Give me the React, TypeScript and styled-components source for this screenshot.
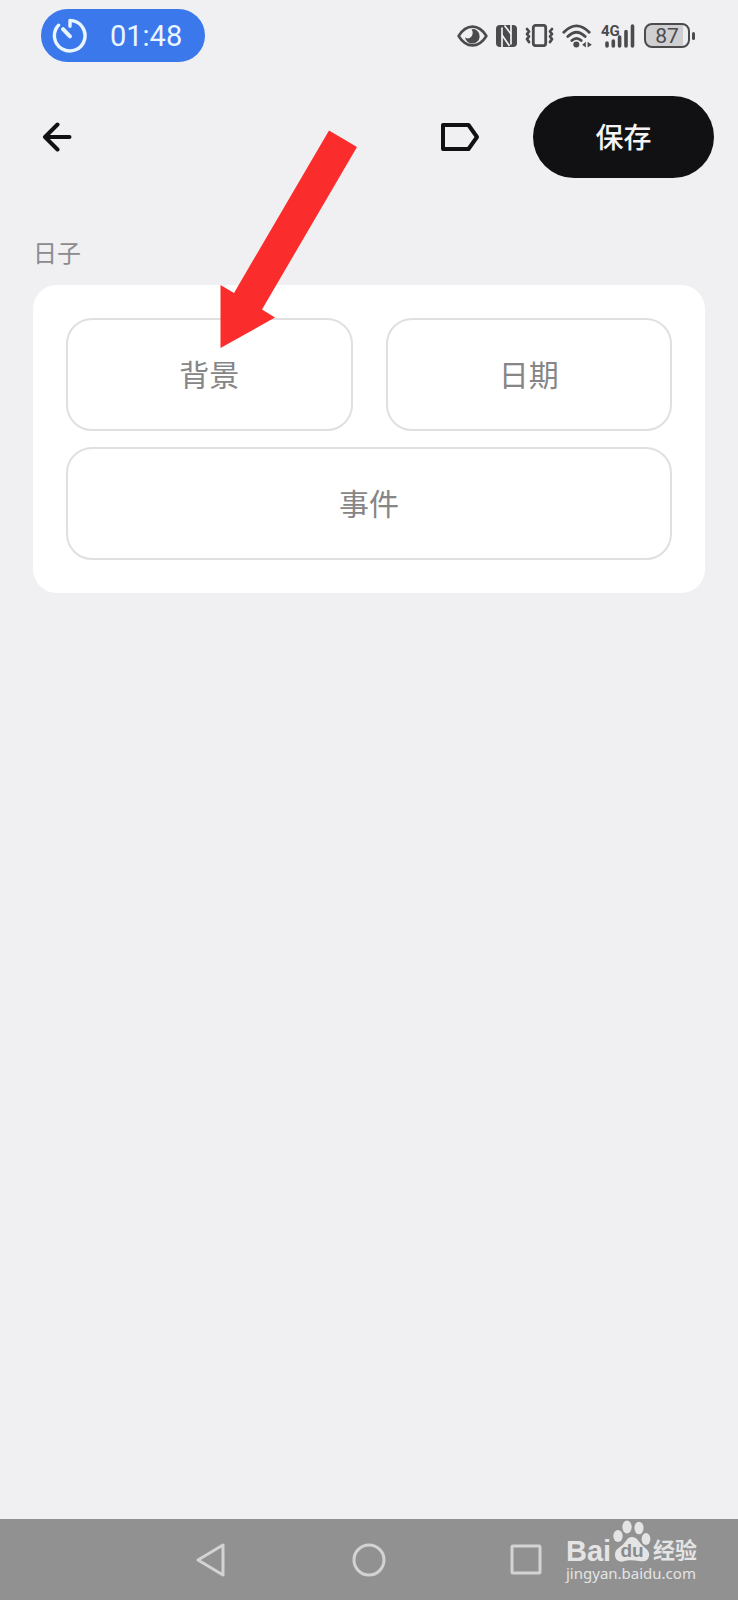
import React from "react";
import styled, { createGlobalStyle } from "styled-components";

const INK = "#111114";
const STATUS = "#4b4b4d";
const PAGE = "#f0f0f3";

const GlobalStyle = createGlobalStyle`
  *, *::before, *::after { box-sizing: border-box; }
  body {
    margin: 0;
    background: ${PAGE};
    font-family: Roboto, "Noto Sans CJK SC", sans-serif;
  }
  button { font-family: inherit; cursor: pointer; }
  svg { display: block; }
`;

const Screen = styled.div`
  position: relative;
  display: flex;
  flex-direction: column;
  min-height: 100vh;
  background: ${PAGE};
  overflow: hidden;
`;

const StatusBar = styled.header`
  display: flex;
  align-items: center;
  justify-content: space-between;
  height: 71px;
  padding: 0 43px 0 41px;
`;

const TimerPill = styled.div`
  display: flex;
  align-items: center;
  gap: 23px;
  height: 53px;
  padding: 0 23px 0 11px;
  border-radius: 27px;
  background: #3b78ec;
  color: #eaf6ff;
  font-size: 29px;
  font-weight: 400;
  line-height: 32px;
`;

const StatusIcons = styled.div`
  display: flex;
  align-items: center;
  gap: 8px;
  color: ${STATUS};
`;

const Battery = styled.div`
  display: flex;
  align-items: center;
  gap: 2px;
`;

const BatteryBody = styled.span`
  width: 46px;
  height: 25px;
  border: 2px solid ${STATUS};
  border-radius: 8px;
  background: linear-gradient(to right, #cfcfd1 87%, #ededf0 87%);
  font-size: 21px;
  font-weight: 400;
  line-height: 22px;
  text-align: center;
`;

const BatteryTip = styled.span`
  width: 3px;
  height: 8px;
  border-radius: 2px;
  background: ${STATUS};
`;

const Toolbar = styled.div`
  display: flex;
  align-items: center;
  height: 132px;
  padding: 0 24px 0 33px;
`;

const IconButton = styled.button`
  display: flex;
  align-items: center;
  justify-content: center;
  width: 48px;
  height: 48px;
  padding: 0;
  border: 0;
  background: none;
  color: ${INK};
`;

const Actions = styled.div`
  display: flex;
  align-items: center;
  gap: 49px;
  margin-left: auto;
`;

const SaveButton = styled.button`
  width: 181px;
  height: 82px;
  padding: 4px 0 0;
  border: 0;
  border-radius: 41px;
  background: ${INK};
  color: #f4f4f6;
  font-size: 28px;
  font-weight: 500;
  line-height: 40px;
`;

const Content = styled.main`
  flex: 1;
  padding: 33px;
`;

const SectionTitle = styled.h2`
  margin: 0 0 13px;
  color: #8b8b8d;
  font-size: 24px;
  font-weight: 400;
  line-height: 36px;
`;

const Card = styled.section`
  display: grid;
  grid-template-columns: 1fr 1fr;
  gap: 16px 33px;
  padding: 33px;
  border-radius: 24px;
  background: #fff;
`;

const Cell = styled.div<{ $wide?: boolean }>`
  position: relative;
  display: flex;
  grid-column: ${(p) => (p.$wide ? "1 / -1" : "auto")};
`;

const OptionButton = styled.button`
  flex: 1;
  height: 113px;
  padding: 2px 0 0;
  border: 2px solid #e0e0e0;
  border-radius: 26px;
  background: #fff;
  color: #868686;
  font-size: 30px;
  line-height: 44px;
`;

const Pointer = styled.svg`
  position: absolute;
  left: 154px;
  bottom: 82px;
  z-index: 1;
  pointer-events: none;
`;

const NavBar = styled.nav`
  display: grid;
  grid-template-columns: repeat(3, 157px);
  justify-content: center;
  height: 81px;
  background: #919191;
`;

const NavButton = styled.button`
  display: flex;
  align-items: center;
  justify-content: center;
  padding: 0;
  border: 0;
  background: none;
  color: #d3d3d3;
`;

const Watermark = styled.div`
  position: absolute;
  right: 41px;
  bottom: 16px;
  width: 131px;
  color: #e4e4e4;
`;

const Brand = styled.div`
  display: flex;
  align-items: flex-end;
  justify-content: space-between;
  height: 43px;
  font-family: "Liberation Sans", "Noto Sans CJK SC", sans-serif;
  font-weight: 700;
  white-space: nowrap;
`;

const BrandLatin = styled.span`
  font-size: 29px;
  line-height: 22px;
`;

const BrandHan = styled.span`
  font-size: 22px;
  line-height: 22px;
`;

const Paw = styled.span`
  position: relative;
  width: 38px;
  height: 42px;
`;

const PawText = styled.span`
  position: absolute;
  left: 0;
  right: 0;
  bottom: 1px;
  color: #8a8a8a;
  font-size: 19px;
  line-height: 20px;
  text-align: center;
`;

const SiteName = styled.div`
  font-family: "Noto Sans", sans-serif;
  font-size: 15px;
  line-height: 22px;
  white-space: nowrap;
`;

const TimerIcon = () => (
  <svg width="35" height="35" viewBox="0 0 35 35" fill="none" stroke="currentColor" strokeWidth="3.4" strokeLinecap="round" strokeLinejoin="round">
    <path d="M6.6 7.2A15.3 15.3 0 1 0 18 2.4V8.2" />
    <path d="M11 11.2L18 18.4" strokeWidth="4" />
  </svg>
);

const EyeIcon = () => (
  <svg width="31" height="22" viewBox="0 0 31 22">
    <path d="M1.6 11Q7.4 1.6 15.5 1.6T29.4 11Q23.6 20.4 15.5 20.4T1.6 11Z" fill="none" stroke="currentColor" strokeWidth="2.6" strokeLinejoin="round" />
    <path d="M17 4A7.4 7.4 0 1 1 8 12.6Q10 14 12.800 13Q15.600 11.600 15.700 8.300Q15.800 6 14.600 4.200Z" fill="currentColor" />
  </svg>
);

const NfcIcon = () => (
  <svg width="21" height="22" viewBox="0 0 21 22">
    <rect width="21" height="22" rx="4" fill="currentColor" />
    <path d="M6 22V2.500M15 0V19.500" stroke={PAGE} strokeWidth="1.700" />
    <path d="M8.500 0.500L15 9M6 10L13.500 21" stroke={PAGE} strokeWidth="1.700" />
  </svg>
);

const VibrateIcon = () => (
  <svg width="29" height="23" viewBox="0 0 29 23" fill="none" stroke="currentColor" strokeLinejoin="round" strokeLinecap="round">
    <rect x="8.3" y="1.3" width="12.4" height="20.4" rx="2.5" strokeWidth="2.8" />
    <path d="M2 5L4 7.5L2 10L4 12.500L2 15L4 18M27 5L25 7.500L27 10L25 12.500L27 15L25 18" strokeWidth="2.800" />
  </svg>
);

const WifiIcon = () => (
  <svg width="30" height="24" viewBox="0 0 30 24" fill="none" stroke="currentColor" strokeWidth="2.8" strokeLinecap="round">
    <path d="M1.8 8.2Q14.5-4.6 27.2 8.2" />
    <path d="M5.8 12.5Q14.5 3.9 23.2 12.5" />
    <path d="M9.8 16.6Q14.5 12.2 19.2 16.6" />
    <circle cx="14.3" cy="20.5" r="3" fill="currentColor" stroke="none" />
    <path d="M20.2 20.7L23.8 17.8V23.6ZM29.8 20.7L25.6 17.8V23.6Z" fill="currentColor" stroke="none" />
  </svg>
);

const SignalIcon = () => (
  <svg width="36" height="30" viewBox="0 0 36 30">
    <text x="1" y="15" fontSize="15" fontWeight="700" fill="currentColor" fontFamily="Roboto, sans-serif">4G</text>
    <path d="M7 25V22M13.3 25V20M19.6 25V16M26 25V10.500M32.5 25V5" stroke="currentColor" strokeWidth="3.600" strokeLinecap="round" />
  </svg>
);

const BackIcon = () => (
  <svg width="30" height="30" viewBox="0 0 30 30" fill="none" stroke="currentColor" strokeWidth="4" strokeLinecap="round" strokeLinejoin="round">
    <path d="M27.500 15H3M15.5 2.5L3 15L15.5 27.5" />
  </svg>
);

const TagIcon = () => (
  <svg width="40" height="30" viewBox="0 0 40 30" fill="none" stroke="currentColor" strokeWidth="4" strokeLinejoin="round">
    <path d="M3 3H28.5L37 15L28.5 27H3Z" />
  </svg>
);

const NavBackIcon = () => (
  <svg width="34" height="34" viewBox="0 0 34 34" fill="none" stroke="currentColor" strokeWidth="3" strokeLinejoin="round">
    <path d="M28 2V32L3 17Z" />
  </svg>
);

const HomeIcon = () => (
  <svg width="34" height="34" viewBox="0 0 34 34" fill="none" stroke="currentColor" strokeWidth="3">
    <circle cx="17" cy="17" r="15" />
  </svg>
);

const RecentIcon = () => (
  <svg width="34" height="34" viewBox="0 0 34 34" fill="none" stroke="currentColor" strokeWidth="3">
    <rect x="3" y="3" width="28" height="27" rx="1" />
  </svg>
);

const PawIcon = () => (
  <svg width="38" height="42" viewBox="0 0 38 42" fill="currentColor">
    <ellipse cx="5" cy="16" rx="4.7" ry="6" />
    <ellipse cx="14" cy="7" rx="4.7" ry="6.5" />
    <ellipse cx="26" cy="8" rx="4.6" ry="6.3" />
    <ellipse cx="33" cy="19" rx="4.4" ry="6" />
    <path d="M19 17C24 17 25 21 29 25S37 31 36 36S31 42 26 41S14 40 11 41.300S2 41 2 35S6 28 9.500 25S14 17 19 17Z" />
  </svg>
);

export default function App() {
  return (
    <>
      <GlobalStyle />
      <Screen>
        <StatusBar>
          <TimerPill>
            <TimerIcon />
            01:48
          </TimerPill>
          <StatusIcons>
            <EyeIcon />
            <NfcIcon />
            <VibrateIcon />
            <WifiIcon />
            <SignalIcon />
            <Battery>
              <BatteryBody>87</BatteryBody>
              <BatteryTip />
            </Battery>
          </StatusIcons>
        </StatusBar>
        <Toolbar>
          <IconButton type="button" aria-label="返回">
            <BackIcon />
          </IconButton>
          <Actions>
            <IconButton type="button" aria-label="标签">
              <TagIcon />
            </IconButton>
            <SaveButton type="button">保存</SaveButton>
          </Actions>
        </Toolbar>
        <Content>
          <SectionTitle>日子</SectionTitle>
          <Card>
            <Cell>
              <OptionButton type="button">背景</OptionButton>
              <Pointer width="138" height="219" viewBox="0 0 138 219" aria-hidden="true">
                <path d="M109 0.5L137 17L42 179.5L55 187.5L0.5 218V155L14 163Z" fill="#fb2c2c" />
              </Pointer>
            </Cell>
            <Cell>
              <OptionButton type="button">日期</OptionButton>
            </Cell>
            <Cell $wide>
              <OptionButton type="button">事件</OptionButton>
            </Cell>
          </Card>
        </Content>
        <NavBar>
          <NavButton type="button" aria-label="后退">
            <NavBackIcon />
          </NavButton>
          <NavButton type="button" aria-label="主页">
            <HomeIcon />
          </NavButton>
          <NavButton type="button" aria-label="最近任务">
            <RecentIcon />
          </NavButton>
        </NavBar>
        <Watermark>
          <Brand>
            <BrandLatin>Bai</BrandLatin>
            <Paw>
              <PawIcon />
              <PawText>du</PawText>
            </Paw>
            <BrandHan>经验</BrandHan>
          </Brand>
          <SiteName>jingyan.baidu.com</SiteName>
        </Watermark>
      </Screen>
    </>
  );
}
